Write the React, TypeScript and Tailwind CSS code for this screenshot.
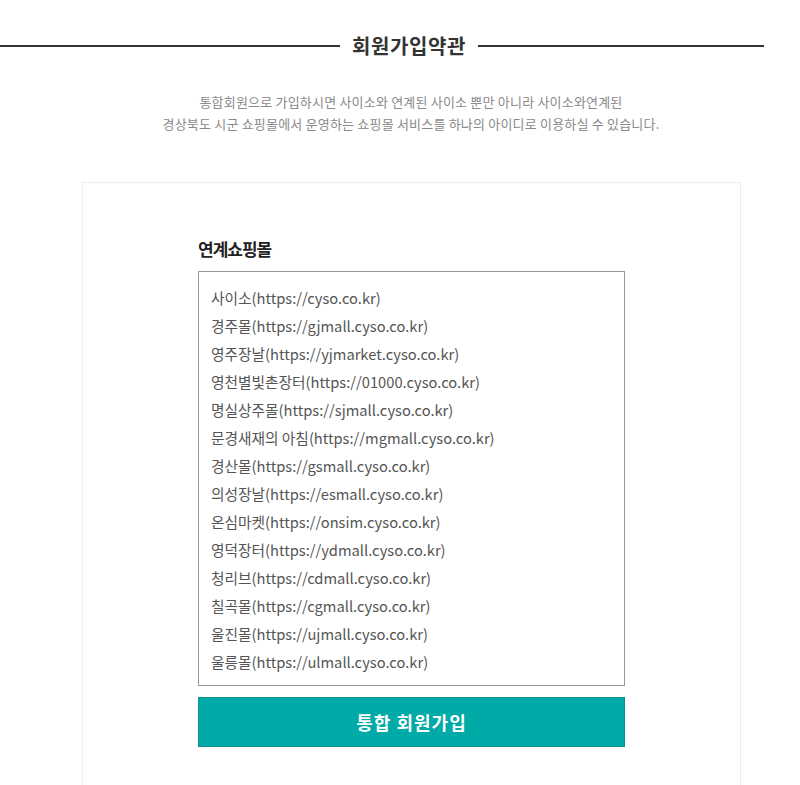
const MALLS = [
  '사이소(https://cyso.co.kr)',
  '경주몰(https://gjmall.cyso.co.kr)',
  '영주장날(https://yjmarket.cyso.co.kr)',
  '영천별빛촌장터(https://01000.cyso.co.kr)',
  '명실상주몰(https://sjmall.cyso.co.kr)',
  '문경새재의 아침(https://mgmall.cyso.co.kr)',
  '경산몰(https://gsmall.cyso.co.kr)',
  '의성장날(https://esmall.cyso.co.kr)',
  '온심마켓(https://onsim.cyso.co.kr)',
  '영덕장터(https://ydmall.cyso.co.kr)',
  '청리브(https://cdmall.cyso.co.kr)',
  '칠곡몰(https://cgmall.cyso.co.kr)',
  '울진몰(https://ujmall.cyso.co.kr)',
  '울릉몰(https://ulmall.cyso.co.kr)',
];

export default function App() {
  return (
    <div
      className="w-[800px] h-[785px] overflow-hidden bg-white pt-[31px]"
      style={{ fontFamily: '"Noto Sans CJK KR", "Noto Sans", sans-serif' }}
    >
      {/* title with rules */}
      <div className="flex items-center h-[30px]">
        <div className="w-[340px] h-[2px] bg-[#333]" />
        <h1 className="mx-3 text-[20px] leading-[30px] font-bold text-[#333] tracking-[0.6px] whitespace-nowrap">
          회원가입약관
        </h1>
        <div className="w-[286px] h-[2px] bg-[#333]" />
      </div>

      <div className="ml-[82px] w-[658px] mt-[30px] text-center text-[13px] leading-[22px] text-[#8a8a8a] tracking-[0.2px]">
        <p>통합회원으로 가입하시면 사이소와 연계된 사이소 뿐만 아니라 사이소와연계된</p>
        <p>경상북도 시군 쇼핑몰에서 운영하는 쇼핑몰 서비스를 하나의 아이디로 이용하실 수 있습니다.</p>
      </div>

      {/* card */}
      <div className="ml-[82px] w-[659px] mt-[47px] h-[700px] border border-[#eeeeee] pt-[54px] pl-[115px]">
        <h2 className="text-[17px] leading-[24px] font-bold text-[#222] tracking-[-1px] mb-[10px]">
          연계쇼핑몰
        </h2>
        <div className="w-[427px] border border-[#999] pt-[12px] pb-[9px] pl-[12px]">
          {MALLS.map((m) => (
            <div key={m} className="text-[14.7px] leading-[28px] text-[#555] whitespace-nowrap">
              {m}
            </div>
          ))}
        </div>
        <button className="mt-[11px] w-[427px] h-[50px] bg-[#00aaa6] border border-[#0d8f8b] text-white text-[18px] font-bold tracking-[1px]">
          통합 회원가입
        </button>
      </div>
    </div>
  );
}
